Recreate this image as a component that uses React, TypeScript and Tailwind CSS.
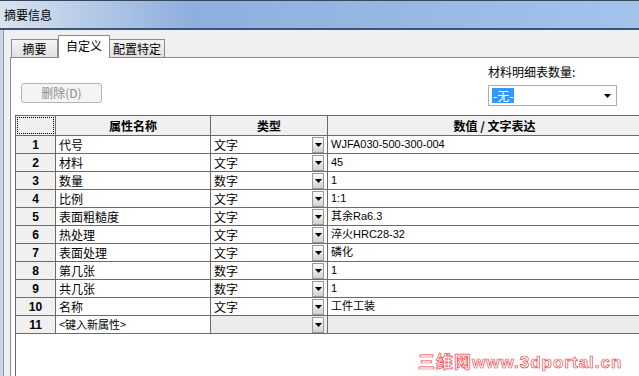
import React from 'react';

const rows = [
  { n: 1, name: '代号', type: '文字', value: 'WJFA030-500-300-004' },
  { n: 2, name: '材料', type: '文字', value: '45' },
  { n: 3, name: '数量', type: '数字', value: '1' },
  { n: 4, name: '比例', type: '文字', value: '1:1' },
  { n: 5, name: '表面粗糙度', type: '文字', value: '其余Ra6.3' },
  { n: 6, name: '热处理', type: '文字', value: '淬火HRC28-32' },
  { n: 7, name: '表面处理', type: '文字', value: '磷化' },
  { n: 8, name: '第几张', type: '数字', value: '1' },
  { n: 9, name: '共几张', type: '数字', value: '1' },
  { n: 10, name: '名称', type: '文字', value: '工件工装' },
];

function DropButton() {
  return (
    <div className="w-[12px] h-[16px] border border-[#9a9a9a] bg-gradient-to-b from-[#fdfdfd] to-[#d2d2d2] flex items-center justify-center shrink-0">
      <svg width="7" height="4" viewBox="0 0 7 4">
        <path d="M0 0h7L3.5 4z" fill="#000" />
      </svg>
    </div>
  );
}

export default function App() {
  return (
    <div className="w-[639px] h-[376px] overflow-hidden relative bg-[#f0f0f0] flex flex-col text-[12px] text-black font-['Liberation_Sans','Noto_Sans_CJK_SC',sans-serif]">
      {/* title bar */}
      <div className="h-[30px] shrink-0 border-t border-[#39465a] border-b-[2px] border-b-[#3f5470] bg-gradient-to-r from-[#d9e3f0] via-[#8eaedd] via-30% to-[#a3c3eb] flex items-center pl-[4px]">
        <span className="font-['Noto_Sans_CJK_SC',sans-serif] leading-none">摘要信息</span>
      </div>

      <div className="flex-1 flex min-h-0">
        {/* window frame */}
        <div className="w-[4px] bg-[#cbd6e6] border-r border-[#8a96a6] shrink-0" />

        <div className="flex-1 flex flex-col pl-[6px] min-w-0">
          {/* tabs */}
          <div className="h-[27px] shrink-0 flex items-end pl-[1px] font-['Noto_Sans_CJK_SC',sans-serif]">
            <div className="w-[47px] h-[18px] border border-b-0 border-[#898c95] bg-gradient-to-b from-[#f4f4f4] to-[#e1e1e1] flex items-center justify-center leading-none">
              摘要
            </div>
            <div className="w-[52px] h-[23px] -mb-px relative z-10 border border-b-0 border-[#898c95] bg-white flex items-start justify-center pt-[4px] leading-none">
              自定义
            </div>
            <div className="w-[55px] h-[18px] border border-b-0 border-l-0 border-[#898c95] bg-gradient-to-b from-[#f4f4f4] to-[#e1e1e1] flex items-center justify-center leading-none">
              配置特定
            </div>
          </div>

          {/* tab panel */}
          <div className="flex-1 flex flex-col border-l border-t border-[#898c95] bg-white min-h-0">
            <div className="h-[57px] shrink-0 flex">
              <div className="pl-[10px] pt-[25px]">
                <div className="w-[81px] h-[20px] rounded-[3px] border border-[#b5b5b5] bg-[#f4f4f4] flex items-center justify-center text-[#8d8d8d] font-['Noto_Sans_CJK_SC',sans-serif] leading-none">
                  删除(D)
                </div>
              </div>
              <div className="ml-[386px] pt-[7px] flex flex-col">
                <span className="h-[14px] leading-[14px] font-['Noto_Sans_CJK_SC',sans-serif]">材料明细表数量:</span>
                <div className="mt-[6px] w-[129px] h-[21px] border border-[#abadb3] bg-white flex items-center pl-[3px] pr-[5px]">
                  <span className="bg-[#3399ff] text-white px-[1px] h-[15px] leading-[15px] font-['Noto_Sans_CJK_SC',sans-serif]">-无-</span>
                  <svg className="ml-auto" width="7" height="4" viewBox="0 0 7 4">
                    <path d="M0 0h7L3.5 4z" fill="#000" />
                  </svg>
                </div>
              </div>
            </div>

            {/* property grid */}
            <div className="flex-1 ml-[4px] border-l border-[#6b6b6b] bg-white min-h-0">
              <div className="grid grid-cols-[40px_155px_117px_334px] border-t border-[#6b6b6b] w-max">
                <div className="h-[20px] border-r border-b border-[#6b6b6b] bg-[#f0f0f0] p-[1px]">
                  <div className="w-full h-full border border-dotted border-black" />
                </div>
                <div className="h-[20px] border-r border-b border-[#6b6b6b] bg-[#f0f0f0] flex items-center justify-center font-bold font-['Noto_Sans_CJK_SC',sans-serif]">
                  属性名称
                </div>
                <div className="h-[20px] border-r border-b border-[#6b6b6b] bg-[#f0f0f0] flex items-center justify-center font-bold font-['Noto_Sans_CJK_SC',sans-serif]">
                  类型
                </div>
                <div className="h-[20px] border-r border-b border-[#6b6b6b] bg-[#f0f0f0] flex items-center justify-center font-bold font-['Noto_Sans_CJK_SC',sans-serif]">
                  数值 / 文字表达
                </div>

                {rows.map(r => (
                  <React.Fragment key={r.n}>
                    <div className="h-[18px] border-r border-b border-[#6b6b6b] bg-[#f0f0f0] flex items-center justify-center font-bold text-[12px]">
                      {r.n}
                    </div>
                    <div className="h-[18px] border-r border-b border-[#6b6b6b] flex items-center pl-[3px] font-['Noto_Sans_CJK_SC',sans-serif]">
                      {r.name}
                    </div>
                    <div className="h-[18px] border-r border-b border-[#6b6b6b] flex items-center justify-between pl-[3px] pr-[3px] font-['Noto_Sans_CJK_SC',sans-serif]">
                      <span>{r.type}</span>
                      <DropButton />
                    </div>
                    <div className="h-[18px] border-r border-b border-[#6b6b6b] flex items-center pl-[3px] text-[11px]">
                      {r.value}
                    </div>
                  </React.Fragment>
                ))}

                <div className="h-[18px] border-r border-b border-[#6b6b6b] bg-[#f0f0f0] flex items-center justify-center font-bold text-[12px]">
                  11
                </div>
                <div className="h-[18px] border-r border-b border-[#6b6b6b] flex items-center pl-[3px] text-[11px] font-['Noto_Sans_CJK_SC',sans-serif]">
                  &lt;键入新属性&gt;
                </div>
                <div className="h-[18px] border-r border-b border-[#6b6b6b] bg-[#ececec] flex items-center justify-end pr-[3px]">
                  <DropButton />
                </div>
                <div className="h-[18px] border-r border-b border-[#6b6b6b] bg-[#ececec]" />
              </div>
            </div>
          </div>
        </div>
      </div>

      {/* watermark */}
      <div className="absolute left-[418px] top-[354px] text-[17px] font-bold leading-none tracking-[1px] text-white [-webkit-text-stroke:0.7px_#e8474c] font-['Liberation_Sans','Noto_Sans_CJK_SC',sans-serif]">
        三维网www.3dportal.cn
      </div>
    </div>
  );
}
